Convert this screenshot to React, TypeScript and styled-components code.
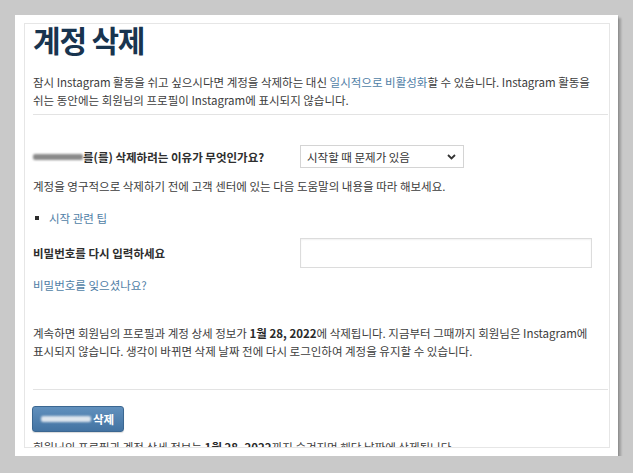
import React from "react";
import styled, { createGlobalStyle } from "styled-components";

const Global = createGlobalStyle`
  html, body {
    margin: 0;
    padding: 0;
    background: #c9c9c9;
  }
  body {
    font-family: "Noto Sans CJK KR", "Noto Sans", sans-serif;
  }
`;

const Page = styled.div`
  padding: 15px 0 0 15px;
`;

const Card = styled.div`
  width: 603px;
  height: 441px;
  box-sizing: border-box;
  background: #ffffff;
  padding: 8px 8px 8px 9px;
  box-shadow: 3px 3px 2px rgba(0, 0, 0, 0.22), 1px 1px 0 rgba(0, 0, 0, 0.08);
`;

const Frame = styled.div`
  height: 425px;
  box-sizing: border-box;
  border: 1px solid #e6e6e6;
  padding: 0 1px 0 8px;
  overflow: hidden;
  color: #3c3c3c;
  font-size: 11.5px;
  line-height: 18px;
`;

const Title = styled.h1`
  margin: 0;
  font-size: 30px;
  line-height: 31px;
  font-weight: 700;
  letter-spacing: -1.2px;
  color: #18344f;
`;

const Para = styled.p<{ $top: number }>`
  margin: ${(p) => p.$top}px 0 0;
  white-space: nowrap;
`;

const Link = styled.span`
  color: #4f7ea6;
`;

const Divider = styled.hr<{ $top: number }>`
  margin: ${(p) => p.$top}px 0 0;
  border: 0;
  height: 1px;
  background: #e3e3e3;
`;

const FieldRow = styled.div<{ $top: number; $h: number }>`
  display: grid;
  grid-template-columns: 267px auto;
  align-items: center;
  margin-top: ${(p) => p.$top}px;
  height: ${(p) => p.$h}px;
`;

const Label = styled.div`
  font-weight: 700;
  color: #2e2e2e;
  display: flex;
  align-items: center;
  white-space: nowrap;
`;

const Blur = styled.span<{ $w: number; $c: string }>`
  display: inline-block;
  width: ${(p) => p.$w}px;
  height: 6px;
  background: ${(p) => p.$c};
  filter: blur(1.3px);
  border-radius: 2px;
`;

const SelectBox = styled.div`
  position: relative;
  width: 164px;
  height: 23px;
  box-sizing: border-box;
  border: 1px solid #d4d4d4;
  background: #fff;
  display: flex;
  align-items: center;
  padding-left: 6px;
  color: #333;
  font-size: 11.5px;
`;

const Chevron = styled.svg`
  position: absolute;
  right: 7px;
  top: 8px;
`;

const Input = styled.div`
  width: 292px;
  height: 30px;
  box-sizing: border-box;
  border: 1px solid #dcdcdc;
  box-shadow: inset 0 1px 2px rgba(0, 0, 0, 0.06);
  background: #fff;
`;

const Bullet = styled.div<{ $top: number }>`
  margin-top: ${(p) => p.$top}px;
  display: flex;
  align-items: center;
  gap: 10px;
  padding-left: 2px;
  &::before {
    content: "";
    width: 4px;
    height: 4px;
    background: #2c2c2c;
  }
`;

const Button = styled.button<{ $top: number }>`
  margin-top: ${(p) => p.$top}px;
  margin-left: -1px;
  width: 92px;
  height: 26px;
  border: 1px solid #3b6791;
  border-radius: 3px;
  background: linear-gradient(#6190bd, #4373a2);
  color: #fff;
  font-family: "Noto Sans CJK KR", sans-serif;
  font-size: 11.5px;
  font-weight: 700;
  display: flex;
  align-items: center;
  gap: 2px;
  padding: 0 0 0 8px;
  box-shadow: 0 1px 1px rgba(0, 0, 0, 0.15);
`;

const Bold = styled.b`
  font-weight: 700;
  color: #2a2a2a;
`;

export default function App() {
  return (
    <>
      <Global />
      <Page>
        <Card>
          <Frame>
            <Title>계정 삭제</Title>
            <Para $top={18}>
              잠시 Instagram 활동을 쉬고 싶으시다면 계정을 삭제하는 대신{" "}
              <Link>일시적으로 비활성화</Link>할 수 있습니다. Instagram 활동을
              <br />
              쉬는 동안에는 회원님의 프로필이 Instagram에 표시되지 않습니다.
            </Para>
            <Divider $top={5} />
            <FieldRow $top={30} $h={23}>
              <Label>
                <Blur $w={50} $c="#8a8a8a" />를(를) 삭제하려는 이유가 무엇인가요?
              </Label>
              <SelectBox>
                시작할 때 문제가 있음
                <Chevron width="9" height="6" viewBox="0 0 9 6">
                  <path d="M1 1 L4.5 4.5 L8 1" fill="none" stroke="#333" strokeWidth="1.8" />
                </Chevron>
              </SelectBox>
            </FieldRow>
            <Para $top={9}>
              계정을 영구적으로 삭제하기 전에 고객 센터에 있는 다음 도움말의 내용을 따라 해보세요.
            </Para>
            <Bullet $top={14}>
              <Link>시작 관련 팁</Link>
            </Bullet>
            <FieldRow $top={11} $h={30}>
              <Label>비밀번호를 다시 입력하세요</Label>
              <Input />
            </FieldRow>
            <Para $top={8}>
              <Link>비밀번호를 잊으셨나요?</Link>
            </Para>
            <Para $top={30}>
              계속하면 회원님의 프로필과 계정 상세 정보가 <Bold>1월 28, 2022</Bold>에 삭제됩니다. 지금부터 그때까지 회원님은 Instagram에
              <br />
              표시되지 않습니다. 생각이 바뀌면 삭제 날짜 전에 다시 로그인하여 계정을 유지할 수 있습니다.
            </Para>
            <Divider $top={29} />
            <Button $top={16}>
              <Blur $w={50} $c="#dfe6ee" />
              삭제
            </Button>
            <Para $top={6}>
              회원님의 프로필과 계정 상세 정보는 <Bold>1월 28, 2022</Bold>까지 숨겨지며 해당 날짜에 삭제됩니다.
            </Para>
          </Frame>
        </Card>
      </Page>
    </>
  );
}
